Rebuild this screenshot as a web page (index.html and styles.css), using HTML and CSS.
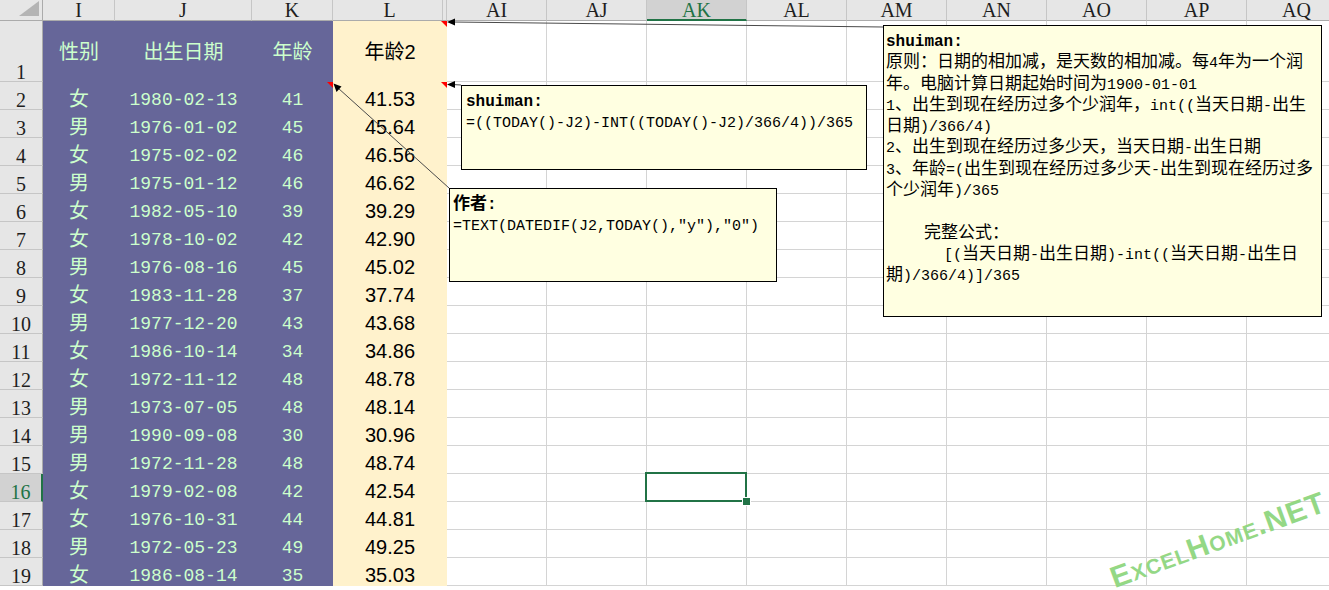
FILE: index.html
```html
<!DOCTYPE html>
<html lang="zh-CN">
<head>
<meta charset="utf-8">
<title>年龄计算</title>
<link rel="stylesheet" href="styles.css">
</head>
<body>
<div class="sheet">
  <div class="grid">
    <div class="corner"></div><div class="ch">I</div><div class="ch">J</div><div class="ch">K</div><div class="ch ch-l">L</div><div class="ch">AI</div><div class="ch">AJ</div><div class="ch on">AK</div><div class="ch">AL</div><div class="ch">AM</div><div class="ch">AN</div><div class="ch">AO</div><div class="ch">AP</div><div class="ch">AQ</div>

    <div class="rh">1</div><div class="p hd">性别</div><div class="p hd">出生日期</div><div class="p hd">年龄</div><div class="y hd note">年龄2</div><div class="e"></div><div class="e"></div><div class="e"></div><div class="e"></div><div class="e"></div><div class="e"></div><div class="e"></div><div class="e"></div><div class="e"></div>

    <div class="rh">2</div><div class="p cj">女</div><div class="p m">1980-02-13</div><div class="p m note">41</div><div class="y n note">41.53</div><div class="e"></div><div class="e"></div><div class="e"></div><div class="e"></div><div class="e"></div><div class="e"></div><div class="e"></div><div class="e"></div><div class="e"></div>
    <div class="rh">3</div><div class="p cj">男</div><div class="p m">1976-01-02</div><div class="p m">45</div><div class="y n">45.64</div><div class="e"></div><div class="e"></div><div class="e"></div><div class="e"></div><div class="e"></div><div class="e"></div><div class="e"></div><div class="e"></div><div class="e"></div>
    <div class="rh">4</div><div class="p cj">女</div><div class="p m">1975-02-02</div><div class="p m">46</div><div class="y n">46.56</div><div class="e"></div><div class="e"></div><div class="e"></div><div class="e"></div><div class="e"></div><div class="e"></div><div class="e"></div><div class="e"></div><div class="e"></div>
    <div class="rh">5</div><div class="p cj">男</div><div class="p m">1975-01-12</div><div class="p m">46</div><div class="y n">46.62</div><div class="e"></div><div class="e"></div><div class="e"></div><div class="e"></div><div class="e"></div><div class="e"></div><div class="e"></div><div class="e"></div><div class="e"></div>
    <div class="rh">6</div><div class="p cj">女</div><div class="p m">1982-05-10</div><div class="p m">39</div><div class="y n">39.29</div><div class="e"></div><div class="e"></div><div class="e"></div><div class="e"></div><div class="e"></div><div class="e"></div><div class="e"></div><div class="e"></div><div class="e"></div>
    <div class="rh">7</div><div class="p cj">女</div><div class="p m">1978-10-02</div><div class="p m">42</div><div class="y n">42.90</div><div class="e"></div><div class="e"></div><div class="e"></div><div class="e"></div><div class="e"></div><div class="e"></div><div class="e"></div><div class="e"></div><div class="e"></div>
    <div class="rh">8</div><div class="p cj">男</div><div class="p m">1976-08-16</div><div class="p m">45</div><div class="y n">45.02</div><div class="e"></div><div class="e"></div><div class="e"></div><div class="e"></div><div class="e"></div><div class="e"></div><div class="e"></div><div class="e"></div><div class="e"></div>
    <div class="rh">9</div><div class="p cj">女</div><div class="p m">1983-11-28</div><div class="p m">37</div><div class="y n">37.74</div><div class="e"></div><div class="e"></div><div class="e"></div><div class="e"></div><div class="e"></div><div class="e"></div><div class="e"></div><div class="e"></div><div class="e"></div>
    <div class="rh">10</div><div class="p cj">男</div><div class="p m">1977-12-20</div><div class="p m">43</div><div class="y n">43.68</div><div class="e"></div><div class="e"></div><div class="e"></div><div class="e"></div><div class="e"></div><div class="e"></div><div class="e"></div><div class="e"></div><div class="e"></div>
    <div class="rh">11</div><div class="p cj">女</div><div class="p m">1986-10-14</div><div class="p m">34</div><div class="y n">34.86</div><div class="e"></div><div class="e"></div><div class="e"></div><div class="e"></div><div class="e"></div><div class="e"></div><div class="e"></div><div class="e"></div><div class="e"></div>
    <div class="rh">12</div><div class="p cj">女</div><div class="p m">1972-11-12</div><div class="p m">48</div><div class="y n">48.78</div><div class="e"></div><div class="e"></div><div class="e"></div><div class="e"></div><div class="e"></div><div class="e"></div><div class="e"></div><div class="e"></div><div class="e"></div>
    <div class="rh">13</div><div class="p cj">男</div><div class="p m">1973-07-05</div><div class="p m">48</div><div class="y n">48.14</div><div class="e"></div><div class="e"></div><div class="e"></div><div class="e"></div><div class="e"></div><div class="e"></div><div class="e"></div><div class="e"></div><div class="e"></div>
    <div class="rh">14</div><div class="p cj">男</div><div class="p m">1990-09-08</div><div class="p m">30</div><div class="y n">30.96</div><div class="e"></div><div class="e"></div><div class="e"></div><div class="e"></div><div class="e"></div><div class="e"></div><div class="e"></div><div class="e"></div><div class="e"></div>
    <div class="rh">15</div><div class="p cj">男</div><div class="p m">1972-11-28</div><div class="p m">48</div><div class="y n">48.74</div><div class="e"></div><div class="e"></div><div class="e"></div><div class="e"></div><div class="e"></div><div class="e"></div><div class="e"></div><div class="e"></div><div class="e"></div>
    <div class="rh on">16</div><div class="p cj">女</div><div class="p m">1979-02-08</div><div class="p m">42</div><div class="y n">42.54</div><div class="e"></div><div class="e"></div><div class="e sel"></div><div class="e"></div><div class="e"></div><div class="e"></div><div class="e"></div><div class="e"></div><div class="e"></div>
    <div class="rh">17</div><div class="p cj">女</div><div class="p m">1976-10-31</div><div class="p m">44</div><div class="y n">44.81</div><div class="e"></div><div class="e"></div><div class="e"></div><div class="e"></div><div class="e"></div><div class="e"></div><div class="e"></div><div class="e"></div><div class="e"></div>
    <div class="rh">18</div><div class="p cj">男</div><div class="p m">1972-05-23</div><div class="p m">49</div><div class="y n">49.25</div><div class="e"></div><div class="e"></div><div class="e"></div><div class="e"></div><div class="e"></div><div class="e"></div><div class="e"></div><div class="e"></div><div class="e"></div>
    <div class="rh">19</div><div class="p cj">女</div><div class="p m">1986-08-14</div><div class="p m">35</div><div class="y n">35.03</div><div class="e"></div><div class="e"></div><div class="e"></div><div class="e"></div><div class="e"></div><div class="e"></div><div class="e"></div><div class="e"></div><div class="e"></div>
  </div>

  <svg class="arrows" width="1329" height="590" viewBox="0 0 1329 590" aria-hidden="true">
    <line x1="452" y1="22" x2="883" y2="27" />
    <polygon points="447,22 455,18.5 455,25.5" />
    <line x1="452" y1="84.5" x2="461" y2="85" />
    <polygon points="447,84.5 455,81 455,88" />
    <line x1="338" y1="88" x2="449" y2="188" />
    <polygon points="333.5,83.5 341.5,86.5 336.5,92" />
  </svg>

  <div class="cmt cmt-big">
    <div class="ln"><span class="au">shuiman:</span></div>
    <div class="ln">原则：日期的相加减，是天数的相加减。每<span class="a">4</span>年为一个润</div>
    <div class="ln">年。电脑计算日期起始时间为<span class="a">1900-01-01</span></div>
    <div class="ln"><span class="a">1</span>、出生到现在经历过多个少润年，<span class="a">int((</span>当天日期<span class="a">-</span>出生</div>
    <div class="ln">日期<span class="a">)/366/4)</span></div>
    <div class="ln"><span class="a">2</span>、出生到现在经历过多少天，当天日期<span class="a">-</span>出生日期</div>
    <div class="ln"><span class="a">3</span>、年龄<span class="a">=(</span>出生到现在经历过多少天<span class="a">-</span>出生到现在经历过多</div>
    <div class="ln">个少润年<span class="a">)/365</span></div>
    <div class="ln"></div>
    <div class="ln ind1">完整公式：</div>
    <div class="ln ind2"><span class="a">[(</span>当天日期<span class="a">-</span>出生日期<span class="a">)-int((</span>当天日期<span class="a">-</span>出生日</div>
    <div class="ln">期<span class="a">)/366/4)]/365</span></div>
  </div>

  <div class="cmt cmt-one">
    <div class="ln"><span class="au">shuiman:</span></div>
    <div class="ln"><span class="a">=((TODAY()-J2)-INT((TODAY()-J2)/366/4))/365</span></div>
  </div>

  <div class="cmt cmt-two">
    <div class="ln"><b class="zh-b">作者</b><span class="au">:</span></div>
    <div class="ln"><span class="a">=TEXT(DATEDIF(J2,TODAY(),"y"),"0")</span></div>
  </div>

  <div class="wm">ExcelHome.NET</div>
</div>
</body>
</html>
```

FILE: styles.css
```css
* { box-sizing: border-box; }

html, body {
  margin: 0;
  padding: 0;
  background: #ffffff;
  overflow: hidden;
}

.sheet {
  position: relative;
  width: 1329px;
  height: 590px;
  overflow: hidden;
  font-family: "Liberation Sans", "Noto Sans CJK SC", sans-serif;
}

.grid {
  display: grid;
  grid-template-columns: 43px 72px 137px 81px 114px repeat(9, 100px);
  grid-template-rows: 21px 61px repeat(18, 28px);
  width: 1347px;
}

.grid > div {
  display: flex;
  justify-content: center;
  align-items: flex-end;
  white-space: nowrap;
  min-width: 0;
}

/* headers */
.corner {
  position: relative;
  background: #e6e6e6;
  border-right: 1px solid #ababab;
  border-bottom: 1px solid #ababab;
}
.corner::after {
  content: "";
  position: absolute;
  right: 3px;
  bottom: 4px;
  width: 20px;
  height: 15px;
  background: #b4b4b4;
  clip-path: polygon(100% 0, 100% 100%, 0 100%);
}

.grid > .ch {
  align-items: center;
  background: #e6e6e6;
  border-right: 1px solid #c6c6c6;
  border-bottom: 1px solid #ababab;
  font: 20px/20px "Liberation Serif", serif;
  color: #1e1e1e;
}
.grid > .ch.on {
  background: #d2d2d2;
  color: #217346;
  border-bottom: 2px solid #217346;
}
.grid > .ch-l {
  box-shadow: inset -3px 0 0 #e6e6e6, inset -4px 0 0 #c6c6c6;
}

.grid > .rh {
  background: #e6e6e6;
  border-right: 1px solid #ababab;
  border-bottom: 1px solid #c6c6c6;
  font: 20px/16px "Liberation Serif", serif;
  color: #1e1e1e;
  padding-bottom: 1px;
}
.grid > .rh.on {
  background: #d2d2d2;
  color: #217346;
  border-right: 2px solid #217346;
}

/* data cells */
.p {
  background: #666699;
  color: #ccffcc;
}
.y {
  background: #fff2cc;
  color: #000000;
}
.grid > .hd {
  align-items: center;
  font: 20px/20px "Liberation Sans", "Noto Sans CJK SC", sans-serif;
}
.grid > .cj {
  font: 20px/20px "Noto Sans CJK SC", sans-serif;
  padding-bottom: 2px;
}
.grid > .m {
  font: 18px/20px "Liberation Mono", monospace;
}
.grid > .n {
  font: 20px/20px "Liberation Sans", sans-serif;
  padding-bottom: 1px;
}

.e {
  border-right: 1px solid #d4d4d4;
  border-bottom: 1px solid #d4d4d4;
}

.note { position: relative; }
.note::after {
  content: "";
  position: absolute;
  top: 0;
  right: 0;
  width: 6px;
  height: 6px;
  background: #ff0000;
  clip-path: polygon(0 0, 100% 0, 100% 100%);
}

.grid > .sel { position: relative; }
.sel::before {
  content: "";
  position: absolute;
  left: -2px;
  top: -2px;
  right: -1px;
  bottom: -1px;
  border: 2px solid #217346;
}
.sel::after {
  content: "";
  position: absolute;
  right: -5px;
  bottom: -5px;
  width: 7px;
  height: 7px;
  background: #217346;
  border: 1px solid #ffffff;
}

/* comment connectors */
.arrows {
  position: absolute;
  left: 0;
  top: 0;
  pointer-events: none;
}
.arrows line {
  stroke: #4a4a4a;
  stroke-width: 1;
}
.arrows polygon {
  fill: #000000;
}

/* comments */
.cmt {
  position: absolute;
  background: #ffffe1;
  border: 1px solid #000000;
  color: #000000;
  font-family: "Noto Sans CJK SC", sans-serif;
  font-size: 17px;
  white-space: nowrap;
  overflow: hidden;
}
.cmt .ln {
  height: 21.3px;
  line-height: 21.3px;
}
.cmt .a {
  font-family: "Liberation Mono", monospace;
  font-size: 15px;
}
.cmt .au {
  font-family: "Liberation Mono", monospace;
  font-size: 16px;
  font-weight: bold;
}
.cmt .zh-b {
  font-weight: bold;
}
.cmt-big {
  left: 883px;
  top: 25px;
  width: 439px;
  height: 292px;
  padding: 2px 0 0 2px;
}
.cmt-big .ind1 { padding-left: 38px; }
.cmt-big .ind2 { padding-left: 58px; }

.cmt-one {
  left: 461px;
  top: 85px;
  width: 406px;
  height: 85px;
  padding: 2px 0 0 4px;
}
.cmt-two {
  left: 449px;
  top: 188px;
  width: 328px;
  height: 94px;
  padding: 2px 0 0 3px;
}

/* watermark */
.wm {
  position: absolute;
  left: 1218px;
  top: 540px;
  transform: translate(-50%, -50%) rotate(-20deg);
  font: bold 30px/1 "Liberation Sans", sans-serif;
  font-variant: small-caps;
  letter-spacing: 1px;
  color: #8fd67f;
  opacity: 0.95;
  white-space: nowrap;
  pointer-events: none;
}
```
